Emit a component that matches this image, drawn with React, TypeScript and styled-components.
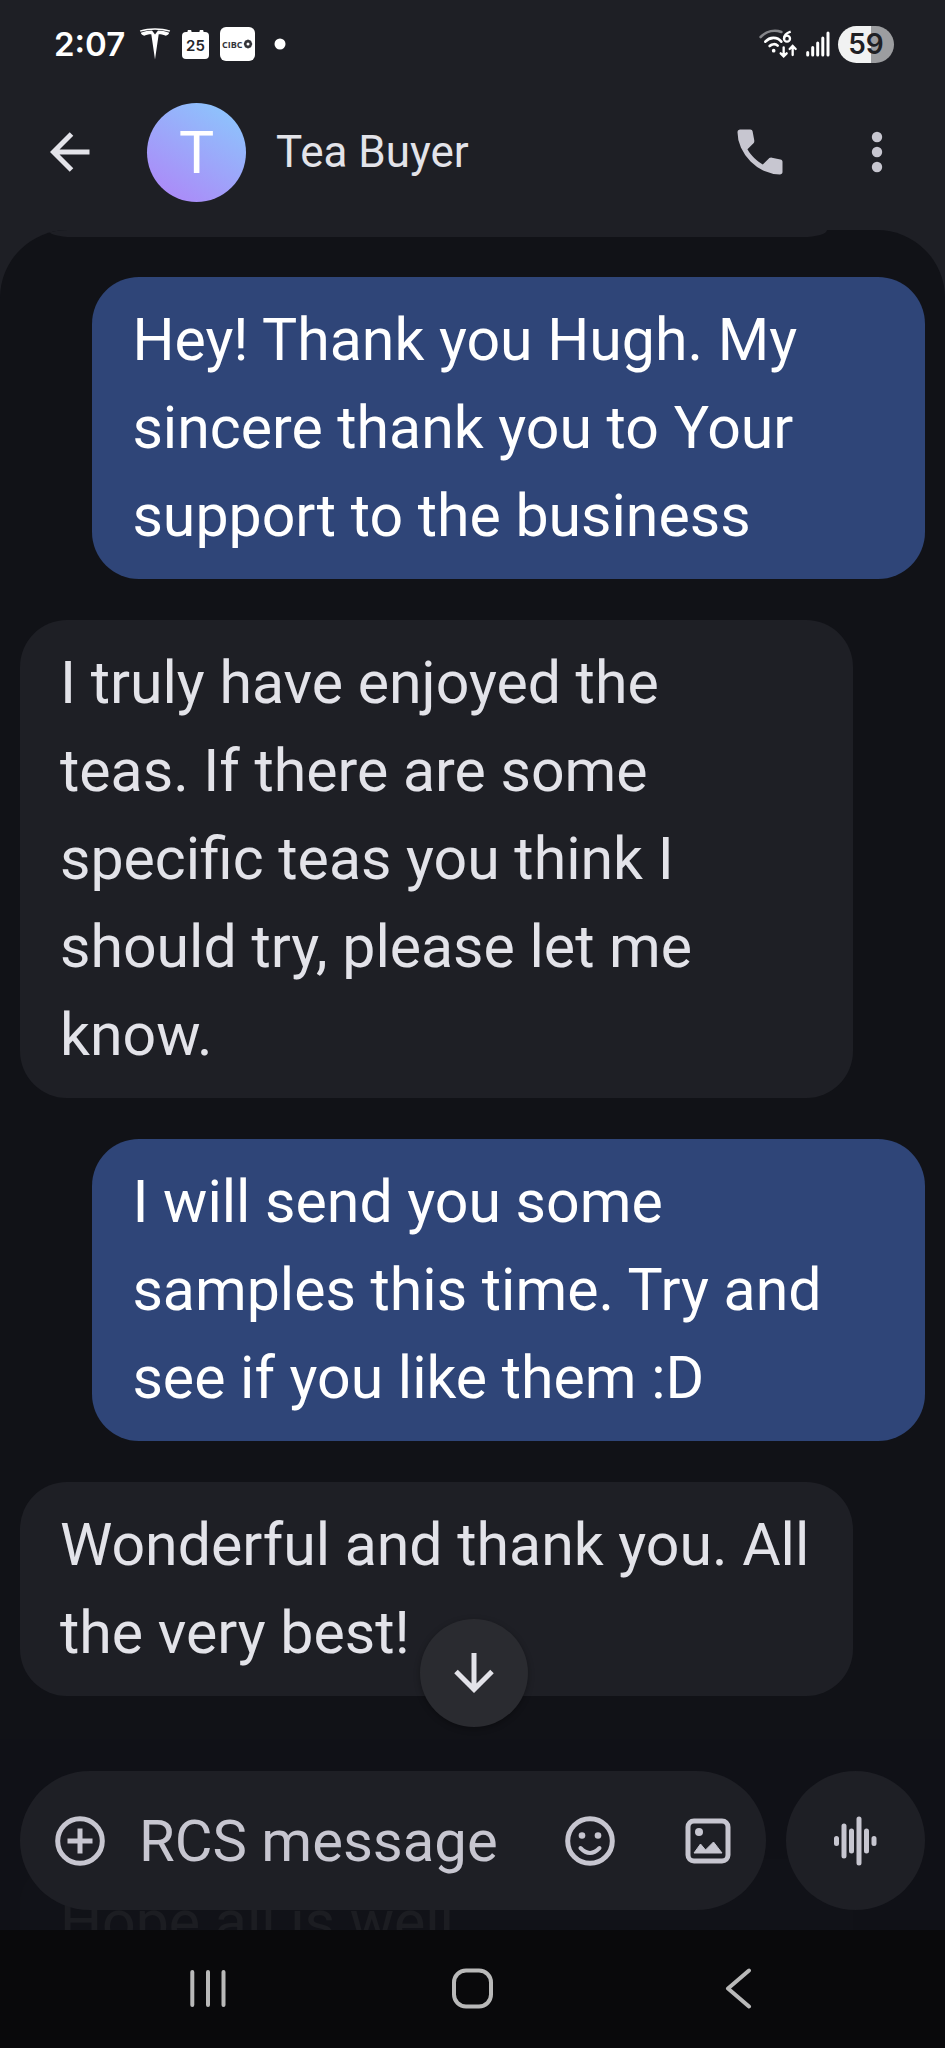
import React from 'react';
import styled, { createGlobalStyle } from 'styled-components';

const GlobalStyle = createGlobalStyle`
  *, *::before, *::after { box-sizing: border-box; }
  body {
    margin: 0;
    background: #1e1f25;
    font-family: Roboto, 'Liberation Sans', sans-serif;
  }
  svg { display: block; flex: none; }
`;

const Screen = styled.div`
  display: flex;
  flex-direction: column;
  height: 100vh;
  overflow: hidden;
  background: #1e1f25;
  color: #e3e3e9;
`;

const StatusBar = styled.div`
  display: flex;
  justify-content: space-between;
  align-items: center;
  height: 88px;
  padding: 0 51px 0 54px;
  color: #fff;
`;

const StatusGroup = styled.div<{ $gap: number }>`
  display: flex;
  align-items: center;
  gap: ${(p) => p.$gap}px;
`;

const Clock = styled.time`
  width: 74px;
  font: 600 33px/40px Inter, sans-serif;
`;

const Badge = styled.span`
  display: grid;
  place-items: center;
  width: 35px;
  height: 34px;
  border-radius: 6px;
  background: #fff;
  color: #333439;
`;

const MoreNotifications = styled.span`
  padding-left: 8px;
`;

const Battery = styled.span`
  display: grid;
  place-items: center;
  width: 56px;
  height: 37px;
  border-radius: 19px;
  background: linear-gradient(to right, #f1f2f2 59%, #9c9da0 59%);
  color: #1f2024;
  font: 600 28px/37px Inter, sans-serif;
`;

const Header = styled.header`
  display: flex;
  align-items: center;
  height: 142px;
  padding: 0 32px 14px 29px;
`;

const IconButton = styled.button<{ $size: number }>`
  display: grid;
  place-items: center;
  flex: none;
  width: ${(p) => p.$size}px;
  height: ${(p) => p.$size}px;
  padding: 0;
  border: 0;
  border-radius: 50%;
  background: none;
  color: inherit;
  cursor: pointer;
`;

const Avatar = styled.span`
  display: grid;
  place-items: center;
  width: 99px;
  height: 99px;
  margin: 0 30px 0 37px;
  border-radius: 50%;
  background: linear-gradient(32deg, #ab8bf8 12%, #8fc0fc 85%);
  color: #fff;
  font-size: 59px;
  line-height: 99px;
`;

const ContactName = styled.h1`
  flex: 1;
  margin: 0;
  font-weight: 400;
  font-size: 44px;
  line-height: 52px;
`;

const HeaderActions = styled.div`
  display: flex;
  align-items: center;
  gap: 41px;
  color: #c7c6d0;
`;

const Conversation = styled.main`
  position: relative;
  flex: 1;
  min-height: 0;
  overflow: hidden;
  border-radius: 68px 68px 0 0;
  background: #111217;
`;

const HeaderLip = styled.div`
  height: 7px;
  margin: 0 118px 0 48px;
  border-radius: 0 0 24px 24px / 0 0 7px 7px;
  background: #1e1f25;
`;

const Thread = styled.ol`
  display: flex;
  flex-direction: column;
  gap: 41px;
  margin: 0;
  padding: 40px 20px 0;
  list-style: none;
`;

const Bubble = styled.li<{ $sent?: boolean }>`
  align-self: ${(p) => (p.$sent ? 'flex-end' : 'flex-start')};
  width: 92%;
  padding: 19px 40px;
  border-radius: 47px;
  background: ${(p) => (p.$sent ? '#2f4578' : '#1e1f25')};
  color: ${(p) => (p.$sent ? '#fff' : '#e3e3e9')};
  font-size: 59px;
  line-height: 88px;
  white-space: pre-line;
`;

const ThreadBreak = styled.li`
  height: 81px;
`;

const ComposerDock = styled.div`
  position: absolute;
  right: 0;
  bottom: 0;
  left: 0;
  padding: 32px 20px 20px;
  background: rgba(17, 18, 23, 0.95);
`;

const Composer = styled.form`
  display: flex;
  gap: 20px;
  color: #c7c6d0;
`;

const Field = styled.div`
  display: flex;
  flex: 1;
  align-items: center;
  min-width: 0;
  height: 139px;
  padding: 0 18px 0 19px;
  border-radius: 70px;
  background: #1e1f25;
`;

const MessageInput = styled.input`
  flex: 1;
  min-width: 0;
  margin-left: 18px;
  padding: 0;
  border: 0;
  outline: 0;
  background: none;
  color: inherit;
  font: 400 58px/88px Roboto, sans-serif;
  &::placeholder { color: #c7c6d0; opacity: 1; }
`;

const FieldActions = styled.div`
  display: flex;
  gap: 38px;
`;

const VoiceButton = styled(IconButton)`
  background: #1e1f25;
`;

const ScrollButton = styled(IconButton)`
  position: absolute;
  bottom: 203px;
  left: 50%;
  margin-left: -53px;
  background: #2a2b30;
  box-shadow: 0 2px 6px rgba(0, 0, 0, 0.3);
`;

const SystemNav = styled.nav`
  display: flex;
  justify-content: space-around;
  align-items: center;
  height: 118px;
  padding: 0 75px;
  background: #09090b;
  color: #b9b9b9;
`;

const TeslaIcon = () => (
  <svg width="32" height="32" viewBox="0 0 32 32" fill="currentColor" aria-hidden="true">
    <path d="M0.8 2.6C10 -.4 22 -.4 31.2 2.6L30.6 3.7C21 1 11 1 1.4 3.7Z" />
    <path d="M1.8 4.7C6 3.3 9.5 2.7 13 2.6L16 6.5L19 2.6C22.5 2.7 26 3.3 30.2 4.7C29.6 6.5 28.3 7.3 26.8 7.7C25.500 7 22.5 6.3 19.7 6.3L16 31.5L12.3 6.3C9.5 6.3 6.5 7 5.2 7.7C3.7 7.3 2.4 6.5 1.8 4.7Z" />
  </svg>
);

const CalendarIcon = () => (
  <svg width="27" height="32" viewBox="0 0 27 32" aria-hidden="true">
    <path d="M6 2.5h3v3H6zM18 2.5h3v3h-3z" fill="#fff" stroke="#fff" strokeLinejoin="round" />
    <rect y="4" width="27" height="27" rx="4" fill="#fff" />
    <text x="13.5" y="23" textAnchor="middle" fontFamily="Inter, sans-serif" fontWeight="600" fontSize="15" fill="#25262b">25</text>
  </svg>
);

const BankIcon = () => (
  <svg width="31" height="12" viewBox="0 0 31 12" aria-hidden="true">
    <text x="0" y="9.5" fontFamily="'Open Sans', sans-serif" fontWeight="700" fontSize="9" fill="#333439">CIBC</text>
    <path d="M26 1.500l3 1.300 1.300 3.200-1.300 3.200-3 1.300-3-1.300L21.700 6 23 2.800z" fill="#333439" />
    <circle cx="26" cy="6" r="1.500" fill="#fff" />
  </svg>
);

const DotIcon = () => (
  <svg width="12" height="12" viewBox="0 0 12 12" aria-hidden="true">
    <circle cx="6" cy="6" r="5.5" fill="#fff" />
  </svg>
);

const WifiIcon = () => (
  <svg width="40" height="30" viewBox="0 0 120 90" fill="none" stroke="currentColor" strokeLinecap="round" aria-hidden="true">
    <path d="M8 24C26 6 50 2 70 9" stroke="#85868a" strokeWidth="8" />
    <path d="M22 38C35 24 57 22 70 38" strokeWidth="8" />
    <path d="M35 51C42 44 53 44 59 50" strokeWidth="8" />
    <circle cx="47" cy="65" r="5.5" fill="currentColor" stroke="none" />
    <path d="M98 8C86 12 78 20 78 29" strokeWidth="7" strokeLinecap="butt" />
    <circle cx="87" cy="29" r="9" strokeWidth="7" />
    <path d="M77 55v26M68 73l9 9 9-9M104 78V52M95 60l9-9 9 9" strokeWidth="7" />
  </svg>
);

const SignalIcon = () => (
  <svg width="24" height="26" viewBox="0 0 24 26" stroke="currentColor" strokeWidth="3" strokeLinecap="round" aria-hidden="true">
    <path d="M1.700 24v-2.500M6.700 24v-7.500M11.700 24V12M16.800 24V7M22 24V2" />
  </svg>
);

const BackArrowIcon = () => (
  <svg width="40" height="40" viewBox="0 0 40 40" fill="none" stroke="currentColor" strokeWidth="5" aria-hidden="true">
    <path d="M39.500 20H4M21.500 2L3.500 20l18 18" />
  </svg>
);

const PhoneIcon = () => (
  <svg width="60" height="60" viewBox="0 0 24 24" fill="currentColor" aria-hidden="true">
    <path d="M19.950 21Q16.825 21 13.775 19.638 10.725 18.275 8.225 15.775 5.725 13.275 4.363 10.225 3 7.175 3 4.050 3 3.600 3.300 3.300 3.600 3 4.050 3H8.100Q8.450 3 8.725 3.238 9 3.475 9.050 3.800L9.700 7.300Q9.750 7.700 9.675 7.975 9.600 8.250 9.400 8.450L6.975 10.900Q7.475 11.825 8.163 12.688 8.850 13.550 9.675 14.350 10.450 15.125 11.300 15.788 12.150 16.450 13.100 17L15.450 14.650Q15.675 14.425 16.038 14.313 16.400 14.200 16.750 14.250L20.200 14.950Q20.550 15.050 20.775 15.313 21 15.575 21 15.900V19.950Q21 20.400 20.700 20.700 20.400 21 19.950 21Z" />
  </svg>
);

const MoreIcon = () => (
  <svg width="12" height="42" viewBox="0 0 12 42" fill="currentColor" aria-hidden="true">
    <circle cx="6" cy="6" r="5.2" />
    <circle cx="6" cy="21" r="5.2" />
    <circle cx="6" cy="36" r="5.2" />
  </svg>
);

const AddIcon = () => (
  <svg width="50" height="50" viewBox="0 0 50 50" fill="none" stroke="currentColor" strokeWidth="5" aria-hidden="true">
    <circle cx="25" cy="25" r="22.3" />
    <path d="M25 12.500v25M12.500 25h25" />
  </svg>
);

const SmileIcon = () => (
  <svg width="50" height="50" viewBox="0 0 50 50" fill="none" stroke="currentColor" strokeWidth="5" aria-hidden="true">
    <circle cx="25" cy="25" r="22.3" />
    <circle cx="17" cy="19.5" r="3.3" fill="currentColor" stroke="none" />
    <circle cx="33" cy="19.5" r="3.3" fill="currentColor" stroke="none" />
    <path d="M15.500 32Q25 42 34.500 32" strokeWidth="4" strokeLinecap="round" />
  </svg>
);

const ImageIcon = () => (
  <svg width="46" height="46" viewBox="0 0 46 46" fill="none" aria-hidden="true">
    <rect x="3" y="3" width="40" height="40" rx="6" stroke="currentColor" strokeWidth="5" />
    <circle cx="14" cy="14" r="4" fill="currentColor" />
    <path d="M9 35l6.500-9 5 6L28.500 24 37 35z" fill="currentColor" stroke="currentColor" strokeLinejoin="round" />
  </svg>
);

const VoiceIcon = () => (
  <svg width="50" height="50" viewBox="0 0 50 50" stroke="currentColor" strokeWidth="5" strokeLinecap="round" aria-hidden="true">
    <path d="M5.500 22.500v5M13 10v30M20.500 15v20M28 3v44M35.500 15v20M43 22.500v5" />
  </svg>
);

const DownArrowIcon = () => (
  <svg width="40" height="42" viewBox="0 0 40 42" fill="none" stroke="currentColor" strokeWidth="5" aria-hidden="true">
    <path d="M20 1v37M2 19.500l18 18 18-18" />
  </svg>
);

const RecentsIcon = () => (
  <svg width="40" height="40" viewBox="0 0 40 40" stroke="currentColor" strokeWidth="4" strokeLinecap="round" aria-hidden="true">
    <path d="M4.300 3v33M20 3v33M35.500 3v33" />
  </svg>
);

const HomeIcon = () => (
  <svg width="42" height="42" viewBox="0 0 42 42" fill="none" stroke="currentColor" strokeWidth="4" aria-hidden="true">
    <rect x="2" y="2.500" width="37" height="36" rx="12" />
  </svg>
);

const NavBackIcon = () => (
  <svg width="28" height="42" viewBox="0 0 28 42" fill="none" stroke="currentColor" strokeWidth="4" strokeLinecap="round" strokeLinejoin="round" aria-hidden="true">
    <path d="M25 2.500L4 20.500 25 38.500" />
  </svg>
);

const messages = [
  { sent: true, text: 'Hey! Thank you Hugh. My\nsincere thank you to Your\nsupport to the business' },
  { sent: false, text: 'I truly have enjoyed the\nteas. If there are some\nspecific teas you think I\nshould try, please let me\nknow.' },
  { sent: true, text: 'I will send you some\nsamples this time. Try and\nsee if you like them :D' },
  { sent: false, text: 'Wonderful and thank you. All\nthe very best!' },
];

export default function App() {
  return (
    <Screen>
      <GlobalStyle />
      <StatusBar>
        <StatusGroup $gap={11}>
          <Clock>2:07</Clock>
          <TeslaIcon />
          <CalendarIcon />
          <Badge><BankIcon /></Badge>
          <MoreNotifications><DotIcon /></MoreNotifications>
        </StatusGroup>
        <StatusGroup $gap={8}>
          <WifiIcon />
          <SignalIcon />
          <Battery>59</Battery>
        </StatusGroup>
      </StatusBar>
      <Header>
        <IconButton type="button" aria-label="Back" $size={81}><BackArrowIcon /></IconButton>
        <Avatar>T</Avatar>
        <ContactName>Tea Buyer</ContactName>
        <HeaderActions>
          <IconButton type="button" aria-label="Call" $size={80}><PhoneIcon /></IconButton>
          <IconButton type="button" aria-label="More options" $size={72}><MoreIcon /></IconButton>
        </HeaderActions>
      </Header>
      <Conversation>
        <HeaderLip />
        <Thread>
          {messages.map((m) => (
            <Bubble key={m.text} $sent={m.sent}>{m.text}</Bubble>
          ))}
          <ThreadBreak aria-hidden="true" />
          <Bubble>Hope all is well</Bubble>
        </Thread>
        <ComposerDock>
          <Composer>
            <Field>
              <IconButton type="button" aria-label="Add attachment" $size={82}><AddIcon /></IconButton>
              <MessageInput type="text" aria-label="RCS message" placeholder="RCS message" />
              <FieldActions>
                <IconButton type="button" aria-label="Emoji" $size={80}><SmileIcon /></IconButton>
                <IconButton type="button" aria-label="Gallery" $size={80}><ImageIcon /></IconButton>
              </FieldActions>
            </Field>
            <VoiceButton type="button" aria-label="Record voice message" $size={139}><VoiceIcon /></VoiceButton>
          </Composer>
        </ComposerDock>
        <ScrollButton type="button" aria-label="Scroll to latest" $size={108}><DownArrowIcon /></ScrollButton>
      </Conversation>
      <SystemNav aria-label="System">
        <IconButton type="button" aria-label="Recent apps" $size={80}><RecentsIcon /></IconButton>
        <IconButton type="button" aria-label="Home" $size={80}><HomeIcon /></IconButton>
        <IconButton type="button" aria-label="Back" $size={80}><NavBackIcon /></IconButton>
      </SystemNav>
    </Screen>
  );
}
